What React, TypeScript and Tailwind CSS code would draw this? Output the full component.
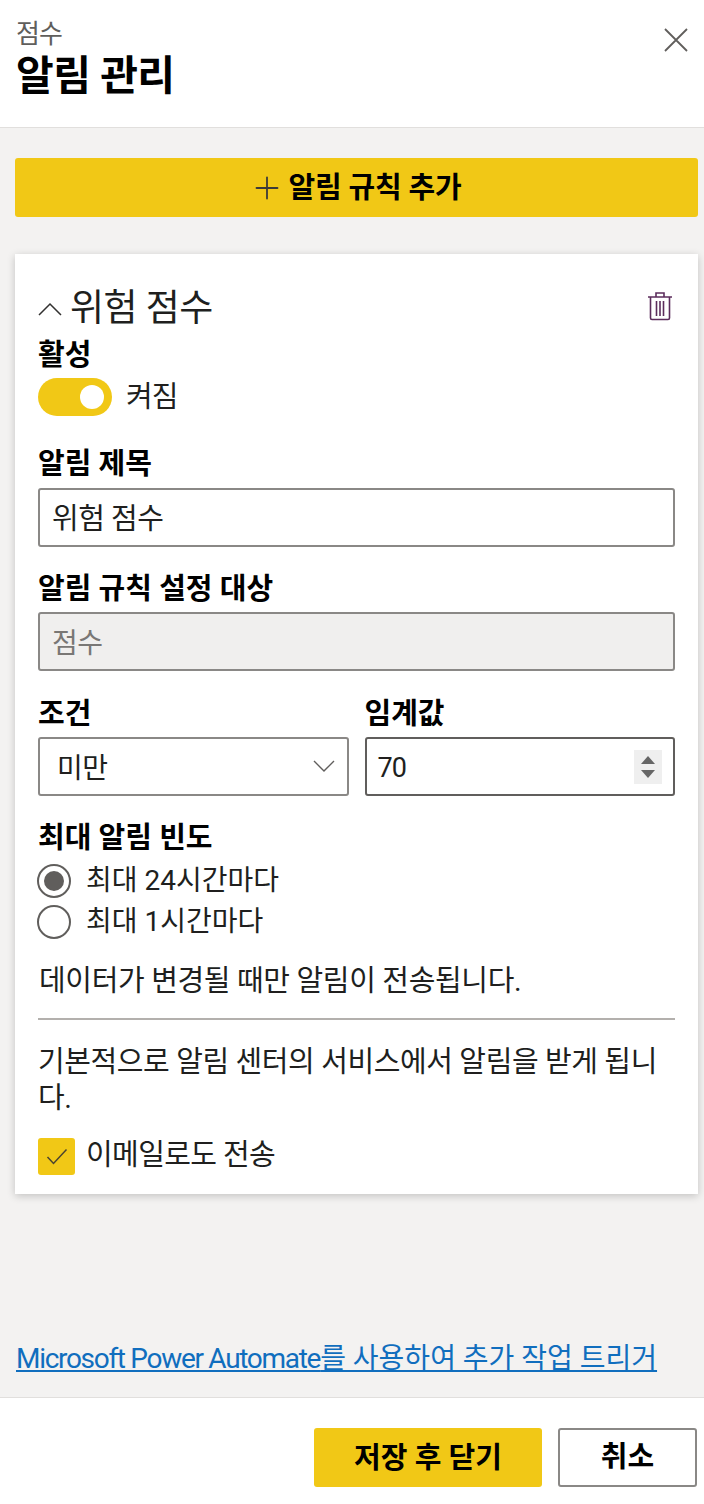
import { Plus } from 'lucide-react';

const FONT = "font-['Roboto','Noto_Sans_CJK_KR',sans-serif]";

function FieldLabel({ children }: { children: string }) {
  return <div className="h-[36px] text-[29px] leading-[36px] font-bold text-black">{children}</div>;
}

function RadioOption({ label, checked = false }: { label: string; checked?: boolean }) {
  return (
    <div className="-ml-px flex h-[41px] items-center gap-[15px]">
      <div className="flex h-[34px] w-[34px] items-center justify-center rounded-full border-2 border-[#605e5c]">
        {checked && <div className="h-[20px] w-[20px] rounded-full bg-[#605e5c]" />}
      </div>
      <span className="text-[28px] text-[#201f1e]">{label}</span>
    </div>
  );
}

export default function App() {
  return (
    <div className={`${FONT} flex h-[1504px] w-[704px] flex-col overflow-hidden bg-[#f3f2f1]`}>
      <header className="relative h-[128px] shrink-0 border-b border-[#e1dfdd] bg-white pl-[16px] pt-[17px]">
        <div className="text-[26px] leading-[34px] tracking-[-1px] text-[#605e5c]">점수</div>
        <div className="pt-[1px] text-[41px] leading-[48px] font-bold tracking-[-0.5px] text-black">알림 관리</div>
        <button type="button" className="absolute top-[28px] right-[16px] text-[#605e5c]">
          <svg width="24" height="24" viewBox="0 0 24 24" fill="none" stroke="currentColor" strokeWidth="1.8" className="block">
            <path d="M1 1l22 22M23 1 1 23" />
          </svg>
        </button>
      </header>

      <main className="flex min-h-0 flex-1 flex-col px-[15px] pt-[30px]">
        <button
          type="button"
          className="flex h-[59px] w-[683px] shrink-0 items-center justify-center gap-[4px] rounded-[3px] bg-[#f1c816] pr-[3px] text-[29px] font-bold tracking-[-0.2px] text-black"
        >
          <Plus size={36} strokeWidth={1.2} className="text-[#3b3a39]" />
          <span className="pt-[2px]">알림 규칙 추가</span>
        </button>

        <section className="mt-[37px] flex h-[940px] w-[683px] shrink-0 flex-col bg-white px-[23px] pt-[28px] shadow-[0_2px_8px_rgba(0,0,0,0.2)]">
          <div className="flex h-[54px] items-center justify-between pr-[2px]">
            <div className="flex items-center gap-[8px]">
              <svg width="24" height="14" viewBox="0 0 24 14" fill="none" stroke="#323130" strokeWidth="1.5">
                <path d="M1 13 12 2l11 11" />
              </svg>
              <span className="text-[37px] leading-[54px] tracking-[-0.5px] text-[#201f1e]">위험 점수</span>
            </div>
            <svg width="26" height="30" viewBox="0 0 26 30" fill="none" stroke="#5c2d5c" strokeWidth="1.6" className="mb-[6px]">
              <path d="M1 6h24M9 6V2h8v4M3.500 6v21a1.500 1.500 0 0 0 1.500 1.500h16a1.500 1.500 0 0 0 1.500-1.500V6M9.500 10v15M13 10v15M16.500 10v15" />
            </svg>
          </div>

          <div className="mt-[1px]">
            <FieldLabel>활성</FieldLabel>
          </div>
          <div className="mt-[5px] flex h-[38px] items-center gap-[14px]">
            <div className="flex h-[38px] w-[74px] items-center justify-end rounded-full bg-[#f1c816] pr-[8px]">
              <div className="h-[24px] w-[24px] rounded-full bg-white" />
            </div>
            <span className="pt-[2px] text-[29px] tracking-[-1px] text-[#201f1e]">켜짐</span>
          </div>

          <div className="mt-[30px]">
            <FieldLabel>알림 제목</FieldLabel>
          </div>
          <div className="mt-[6px] flex h-[59px] items-center rounded-[3px] border-2 border-[#8a8886] pt-[5px] pl-[12px] text-[29px] tracking-[-0.5px] text-[#201f1e]">
            위험 점수
          </div>

          <div className="mt-[24px]">
            <FieldLabel>알림 규칙 설정 대상</FieldLabel>
          </div>
          <div className="mt-[5px] flex h-[59px] items-center rounded-[3px] border-2 border-[#8a8886] bg-[#f0efee] pt-[5px] pl-[12px] text-[28px] tracking-[-0.5px] text-[#797775]">
            점수
          </div>

          <div className="mt-[25px] flex gap-[16px]">
            <div className="w-[311px]">
              <FieldLabel>조건</FieldLabel>
              <div className="mt-[5px] flex h-[59px] items-center justify-between rounded-[3px] border-2 border-[#8a8886] pr-[12px] pl-[17px] text-[28px] tracking-[-0.5px] text-[#201f1e]">
                <span className="pt-[4px]">미만</span>
                <svg width="22" height="13" viewBox="0 0 22 13" fill="none" stroke="#605e5c" strokeWidth="1.4">
                  <path d="M1 1l10 10L21 1" />
                </svg>
              </div>
            </div>
            <div className="w-[311px]">
              <FieldLabel>임계값</FieldLabel>
              <div className="mt-[5px] flex h-[59px] items-center justify-between rounded-[3px] border-2 border-[#605e5c] pr-[11px] pl-[11px] text-[27px] tracking-[-1px] text-[#201f1e]">
                <span className="pt-[4px]">70</span>
                <div className="flex h-[34px] w-[28px] flex-col items-center justify-center gap-[6px] bg-[#efefef]">
                  <div className="h-0 w-0 border-x-[7px] border-b-[8px] border-x-transparent border-b-[#666666]" />
                  <div className="h-0 w-0 border-x-[7px] border-t-[8px] border-x-transparent border-t-[#666666]" />
                </div>
              </div>
            </div>
          </div>

          <div className="mt-[24px]">
            <FieldLabel>최대 알림 빈도</FieldLabel>
          </div>
          <div className="mt-[4px]">
            <RadioOption label="최대 24시간마다" checked />
            <RadioOption label="최대 1시간마다" />
          </div>

          <p className="mt-[20px] pl-[1px] text-[29px] leading-[38px] tracking-[-0.35px] text-[#201f1e]">
            데이터가 변경될 때만 알림이 전송됩니다.
          </p>
          <div className="mt-[18px] h-[2px] bg-[#b3b0ad]" />
          <p className="mt-[24px] text-[29px] leading-[36px] tracking-[-0.4px] text-[#201f1e]">
            기본적으로 알림 센터의 서비스에서 알림을 받게 됩니다.
          </p>
          <div className="mt-[18px] flex items-center gap-[11px]">
            <div className="flex h-[37px] w-[37px] items-center justify-center rounded-[3px] bg-[#f1c816]">
              <svg width="22" height="17" viewBox="0 0 22 17" fill="none" stroke="#4a4430" strokeWidth="1.5">
                <path d="M1.500 9l6 6.500L20.500 1.500" />
              </svg>
            </div>
            <span className="pb-[2px] text-[29px] tracking-[-0.6px] text-[#201f1e]">이메일로도 전송</span>
          </div>
        </section>

        <div className="mt-auto pb-[20px] pl-[1px]">
          <a href="#" className="text-[28px] leading-[36px] text-[#106ebe] underline">
            <span className="tracking-[-1.3px]">Microsoft Power Automate</span>를 사용하여 추가 작업 트리거
          </a>
        </div>
      </main>

      <footer className="flex h-[107px] shrink-0 justify-end gap-[16px] border-t border-[#e1dfdd] bg-white pt-[30px] pr-[7px]">
        <button type="button" className="h-[59px] w-[228px] rounded-[3px] bg-[#f1c816] pt-[2px] text-[29px] font-bold text-black">
          저장 후 닫기
        </button>
        <button type="button" className="h-[59px] w-[139px] rounded-[3px] border-2 border-[#8a8886] bg-white pt-[1px] text-[29px] font-bold text-black">
          취소
        </button>
      </footer>
    </div>
  );
}
